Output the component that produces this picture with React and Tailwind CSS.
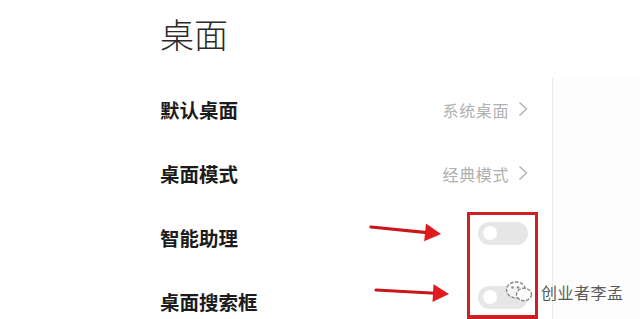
import React from "react";

const font = { fontFamily: '"Noto Sans CJK SC", "Noto Sans", sans-serif' };

function Chevron() {
  return (
    <svg width="10" height="16" viewBox="0 0 10 16" className="ml-[9px]">
      <polyline points="1.5,1.5 8.5,8 1.5,14.5" fill="none" stroke="#b5b5b5" strokeWidth="1.6" strokeLinejoin="miter" />
    </svg>
  );
}

function Toggle() {
  return (
    <div className="w-[50px] h-[23px] rounded-full bg-[#e6e6e6] flex items-center mb-[8px]">
      <div className="w-[14px] h-[14px] rounded-full bg-white ml-[5px]" />
    </div>
  );
}

function Row({ label, value, toggle }) {
  return (
    <div className="h-[64px] shrink-0 flex items-center justify-between">
      <span className="text-[19.5px] font-bold text-[#1c1c1c] leading-none pt-[2px]">{label}</span>
      {toggle ? (
        <Toggle />
      ) : (
        <div className="flex items-center">
          <span className="text-[16px] text-[#b0b0b0] leading-none pt-[1px] tracking-[0.6px]">{value}</span>
          <Chevron />
        </div>
      )}
    </div>
  );
}

function Arrow({ x1, y1, x2, y2 }) {
  const dx = x2 - x1, dy = y2 - y1;
  const len = Math.sqrt(dx * dx + dy * dy);
  const ux = dx / len, uy = dy / len;
  const hl = 16, hw = 9;
  const bx = x2 - ux * hl, by = y2 - uy * hl;
  const p1 = `${bx - uy * hw},${by + ux * hw}`;
  const p2 = `${bx + uy * hw},${by - ux * hw}`;
  return (
    <g>
      <line x1={x1} y1={y1} x2={bx + ux * 2} y2={by + uy * 2} stroke="#c8161b" strokeWidth="3.2" strokeLinecap="round" />
      <polygon points={`${x2},${y2} ${p1} ${p2}`} fill="#e01a1f" />
    </g>
  );
}

export default function App() {
  return (
    <div className="relative w-[640px] h-[319px] bg-white overflow-hidden flex" style={font}>
      <div className="ml-[160px] w-[368px] flex flex-col shrink-0">
        <div className="h-[77px] shrink-0 flex items-start pt-[14px]">
          <span className="text-[34px] font-light text-[#2a2a2a] leading-[40px]">桌面</span>
        </div>
        <Row label="默认桌面" value="系统桌面" />
        <Row label="桌面模式" value="经典模式" />
        <Row label="智能助理" toggle />
        <Row label="桌面搜索框" toggle />
      </div>
      <div className="ml-auto w-[88px] mt-[78px] border-l border-[#e9e9e9] bg-[#fdfdfd]" />

      {/* annotations */}
      <svg className="absolute left-0 top-0 pointer-events-none" width="640" height="319">
        <Arrow x1={371} y1={227} x2={441} y2={234} />
        <Arrow x1={376} y1={290} x2={449} y2={294} />
        <rect x="468.5" y="213.5" width="68" height="103" fill="none" stroke="#d01f24" strokeWidth="3" />
        <line x1="467" y1="319" x2="538" y2="319" stroke="#d01f24" strokeWidth="3" />
      </svg>

      {/* watermark */}
      <div className="absolute left-[505px] top-[280px] flex items-center">
        <svg width="28" height="24" viewBox="0 0 28 24">
          <ellipse cx="11" cy="10" rx="9.5" ry="8" fill="rgba(255,255,255,0.6)" stroke="#8a8a8a" strokeWidth="1.4" strokeDasharray="3.5 1.5" />
          <ellipse cx="19" cy="14.5" rx="7.5" ry="6.2" fill="rgba(255,255,255,0.85)" stroke="#8a8a8a" strokeWidth="1.4" strokeDasharray="3.5 1.5" />
          <circle cx="7.5" cy="7.5" r="1.2" fill="#8a8a8a" />
          <circle cx="13" cy="7.5" r="1.2" fill="#8a8a8a" />
        </svg>
        <span className="ml-[8px] text-[16px] text-[#5a5a5a] leading-none tracking-[0.5px]" style={{ textShadow: "0 0 2px #fff, 0 0 2px #fff" }}>创业者李孟</span>
      </div>
    </div>
  );
}
